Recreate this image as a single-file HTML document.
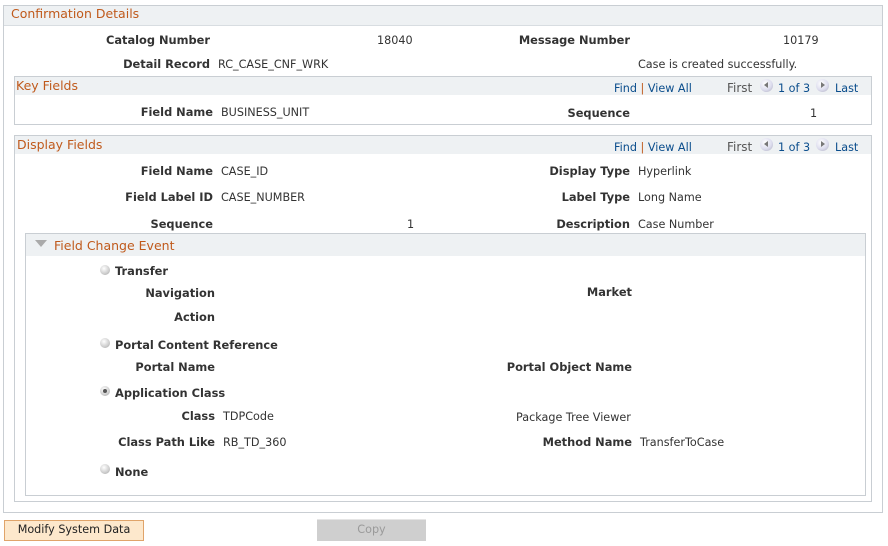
<!DOCTYPE html>
<html><head><meta charset="utf-8"><style>
body{margin:0;width:888px;height:546px;background:#fff;position:relative;font-family:"DejaVu Sans",Verdana,sans-serif;font-size:11.2px;color:#333;overflow:hidden}
div,span{position:absolute}
span{line-height:14px;white-space:nowrap}
.b{font-weight:bold;font-size:11.4px}
.h{color:#c05a1c;font-size:12.5px;line-height:16px}
.a{color:#0a4d8c}
.box{border:1px solid #c9ced3;box-sizing:border-box}
.hd{background:#eef1f3}
.r{width:10px;height:10px;border-radius:50%;background:radial-gradient(circle at 40% 35%,#fff,#ccc 60%,#999);box-sizing:border-box}
.r.on::after{content:"";position:absolute;left:3px;top:3px;width:4px;height:4px;border-radius:50%;background:#555}
.ic{width:13px;height:13px;border-radius:50%;background:radial-gradient(circle at 40% 35%,#fff,#dde 55%,#aab);}
.ic.l::after{content:"";position:absolute;left:4px;top:3px;border-top:3.5px solid transparent;border-bottom:3.5px solid transparent;border-right:4px solid #777}
.ic.rt::after{content:"";position:absolute;left:5px;top:3px;border-top:3.5px solid transparent;border-bottom:3.5px solid transparent;border-left:4px solid #777}
</style></head><body>
<div class="box" style="left:3px;top:5px;width:880px;height:508px"></div>
<div class="hd" style="left:4px;top:6px;width:878px;height:19px;border-bottom:1px solid #d8dde1"></div>
<span class="h" style="left:11px;top:6px">Confirmation Details</span>

<span class="b" style="right:678px;top:33px">Catalog Number</span>
<span style="left:377px;top:34px">18040</span>
<span class="b" style="right:258px;top:33px">Message Number</span>
<span style="left:783px;top:34px">10179</span>
<span class="b" style="right:678px;top:57px">Detail Record</span>
<span style="left:218px;top:58px">RC_CASE_CNF_WRK</span>
<span style="left:638px;top:58px">Case is created successfully.</span>

<div class="box" style="left:14px;top:76px;width:858px;height:49px"></div>
<div class="hd" style="left:15px;top:77px;width:856px;height:18px"></div>
<span class="h" style="left:16px;top:78px">Key Fields</span>
<span style="left:614px;top:82px"><span class="a" style="position:static">Find</span> <span style="position:static;color:#c05a1c">|</span> <span class="a" style="position:static">View All</span></span>
<span style="left:727px;top:81px;font-size:12px;color:#555">First</span>
<div class="ic l" style="left:760px;top:79px"></div>
<span class="a" style="left:778px;top:82px">1 of 3</span>
<div class="ic rt" style="left:816px;top:79px"></div>
<span class="a" style="left:835px;top:82px">Last</span>
<span class="b" style="right:675px;top:105px">Field Name</span>
<span style="left:221px;top:106px">BUSINESS_UNIT</span>
<span class="b" style="right:258px;top:106px">Sequence</span>
<span style="left:810px;top:107px">1</span>

<div class="box" style="left:14px;top:135px;width:858px;height:367px"></div>
<div class="hd" style="left:15px;top:136px;width:856px;height:18px"></div>
<span class="h" style="left:17px;top:137px">Display Fields</span>
<span style="left:614px;top:141px"><span class="a" style="position:static">Find</span> <span style="position:static;color:#c05a1c">|</span> <span class="a" style="position:static">View All</span></span>
<span style="left:727px;top:140px;font-size:12px;color:#555">First</span>
<div class="ic l" style="left:760px;top:138px"></div>
<span class="a" style="left:778px;top:141px">1 of 3</span>
<div class="ic rt" style="left:816px;top:138px"></div>
<span class="a" style="left:835px;top:141px">Last</span>

<span class="b" style="right:675px;top:164px">Field Name</span>
<span style="left:221px;top:165px">CASE_ID</span>
<span class="b" style="right:258px;top:164px">Display Type</span>
<span style="left:638px;top:165px">Hyperlink</span>
<span class="b" style="right:675px;top:190px">Field Label ID</span>
<span style="left:221px;top:191px">CASE_NUMBER</span>
<span class="b" style="right:258px;top:190px">Label Type</span>
<span style="left:638px;top:191px">Long Name</span>
<span class="b" style="right:675px;top:217px">Sequence</span>
<span style="left:407px;top:218px">1</span>
<span class="b" style="right:258px;top:217px">Description</span>
<span style="left:638px;top:218px">Case Number</span>

<div class="box" style="left:25px;top:233px;width:841px;height:263px"></div>
<div class="hd" style="left:26px;top:234px;width:839px;height:22px"></div>
<div style="left:35px;top:240px;width:0;height:0;border-left:6px solid transparent;border-right:6px solid transparent;border-top:7px solid #aaa"></div>
<span class="h" style="left:54px;top:238px">Field Change Event</span>

<div class="r" style="left:100px;top:265px"></div>
<span class="b" style="left:115px;top:264px">Transfer</span>
<span class="b" style="right:673px;top:286px">Navigation</span>
<span class="b" style="right:256px;top:285px">Market</span>
<span class="b" style="right:673px;top:310px">Action</span>
<div class="r" style="left:100px;top:338px"></div>
<span class="b" style="left:115px;top:338px">Portal Content Reference</span>
<span class="b" style="right:673px;top:360px">Portal Name</span>
<span class="b" style="right:256px;top:360px">Portal Object Name</span>
<div class="r on" style="left:100px;top:386px"></div>
<span class="b" style="left:115px;top:386px">Application Class</span>
<span class="b" style="right:673px;top:409px">Class</span>
<span style="left:223px;top:410px">TDPCode</span>
<span style="left:516px;top:411px">Package Tree Viewer</span>
<span class="b" style="right:673px;top:435px">Class Path Like</span>
<span style="left:223px;top:436px">RB_TD_360</span>
<span class="b" style="right:256px;top:435px">Method Name</span>
<span style="left:640px;top:436px">TransferToCase</span>
<div class="r" style="left:100px;top:464px"></div>
<span class="b" style="left:115px;top:465px">None</span>

<div style="left:4px;top:520px;width:140px;height:21px;background:#fde8cc;border:1px solid #e0a46a;box-sizing:border-box"></div>
<span style="left:4px;top:523px;width:140px;text-align:center;color:#222">Modify System Data</span>
<div style="left:317px;top:519px;width:109px;height:22px;background:#cfcfcf;border-top:1px solid #e5e5e5;box-sizing:border-box"></div>
<span style="left:317px;top:523px;width:109px;text-align:center;color:#9a9a9a">Copy</span>
</body></html>
